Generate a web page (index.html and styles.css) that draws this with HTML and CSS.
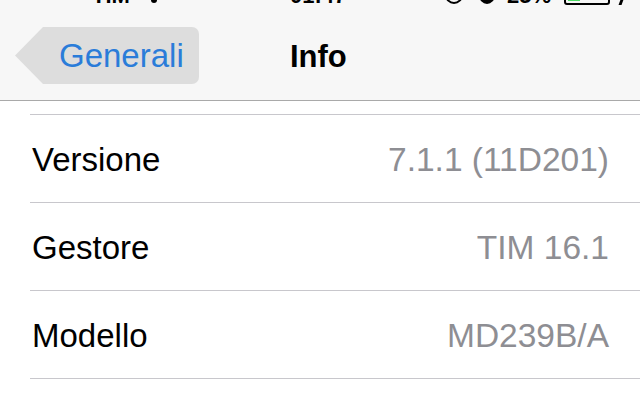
FILE: index.html
```html
<!DOCTYPE html>
<html>
<head>
<meta charset="utf-8">
<link rel="stylesheet" href="styles.css">
</head>
<body>
<div class="nav">
  <div class="status">
    <span class="carrier">TIM</span>
    <span class="wifi"></span>
    <span class="time">01:47</span>
    <span class="alarm"></span>
    <span class="moon"></span>
    <span class="pct">25%</span>
    <span class="battery"><span class="fill"></span></span>
    <span class="bolt"></span>
  </div>
  <div class="navrow">
    <div class="back">Generali</div>
    <div class="title">Info</div>
  </div>
</div>
<div class="list">
  <div class="row"><span class="label">Versione</span><span class="value">7.1.1 (11D201)</span></div>
  <div class="row"><span class="label">Gestore</span><span class="value">TIM 16.1</span></div>
  <div class="row"><span class="label">Modello</span><span class="value">MD239B/A</span></div>
  <div class="row end"></div>
</div>
</body>
</html>
```
FILE: styles.css
```css
html, body {
  margin: 0;
  padding: 0;
}
body {
  width: 640px;
  height: 403px;
  overflow: hidden;
  background: #ffffff;
  font-family: "Liberation Sans", Arial, sans-serif;
}
.nav {
  background: #f7f7f7;
  height: 100px;
  border-bottom: 1px solid #a9a9a9;
}
.status {
  height: 7px;
  overflow: hidden;
  display: flex;
  align-items: flex-start;
  padding-left: 92px;
  font-size: 22px;
  line-height: 22px;
  font-weight: bold;
  color: #000;
}
.status > span {
  margin-top: -15px;
  flex: none;
}
.carrier { width: 34px; }
.wifi {
  margin-left: 23px;
  width: 10px;
  height: 18px;
  position: relative;
}
.wifi::after {
  content: "";
  position: absolute;
  left: 2px;
  bottom: 0;
  width: 6px;
  height: 6px;
  background: #000;
  border-radius: 0 0 3px 3px;
}
.time { margin-left: 131px; width: 56px; }
.alarm {
  margin-left: 99px;
  width: 18px;
  height: 18px;
  box-sizing: border-box;
  border: 2px solid #000;
  border-radius: 50%;
  margin-top: -14px !important;
}
.moon {
  margin-left: 16px;
  width: 16px;
  height: 18px;
  background: #000;
  border-radius: 50%;
  margin-top: -14px !important;
}
.pct { margin-left: 12px; width: 52px; }
.battery {
  margin-left: 5px;
  width: 46px;
  height: 20px;
  box-sizing: border-box;
  border: 2px solid #000;
  border-radius: 3px;
  margin-top: -15px !important;
  display: flex;
  padding: 2px;
}
.battery .fill {
  width: 12px;
  background: #4cd964;
}
.bolt {
  margin-left: 10px;
  width: 3px;
  height: 8px;
  background: #000;
  transform: skewX(-20deg);
  margin-top: -3px !important;
}
.navrow {
  display: flex;
  align-items: baseline;
  padding-top: 20px;
  padding-left: 15px;
}
.back {
  width: 184px;
  height: 57px;
  box-sizing: border-box;
  padding-left: 44px;
  background: #dddddd;
  border-radius: 7px;
  clip-path: polygon(28px 0, 100% 0, 100% 100%, 28px 100%, 0 50%);
  color: #2a7cd9;
  font-size: 33px;
  line-height: 57px;
  white-space: nowrap;
}
.title {
  margin-left: 91px;
  font-size: 31px;
  font-weight: bold;
  color: #000;
}
.list {
  padding-top: 13px;
}
.row {
  margin-left: 30px;
  border-top: 1px solid #c8c7cc;
  height: 87px;
  box-sizing: content-box;
  display: flex;
  justify-content: space-between;
  align-items: baseline;
  padding-left: 2px;
  padding-right: 31px;
  line-height: 90px;
}
.row.end {
  height: 20px;
}
.label {
  font-size: 33px;
  color: #000;
}
.value {
  font-size: 33.5px;
  color: #8e8e93;
}
```
